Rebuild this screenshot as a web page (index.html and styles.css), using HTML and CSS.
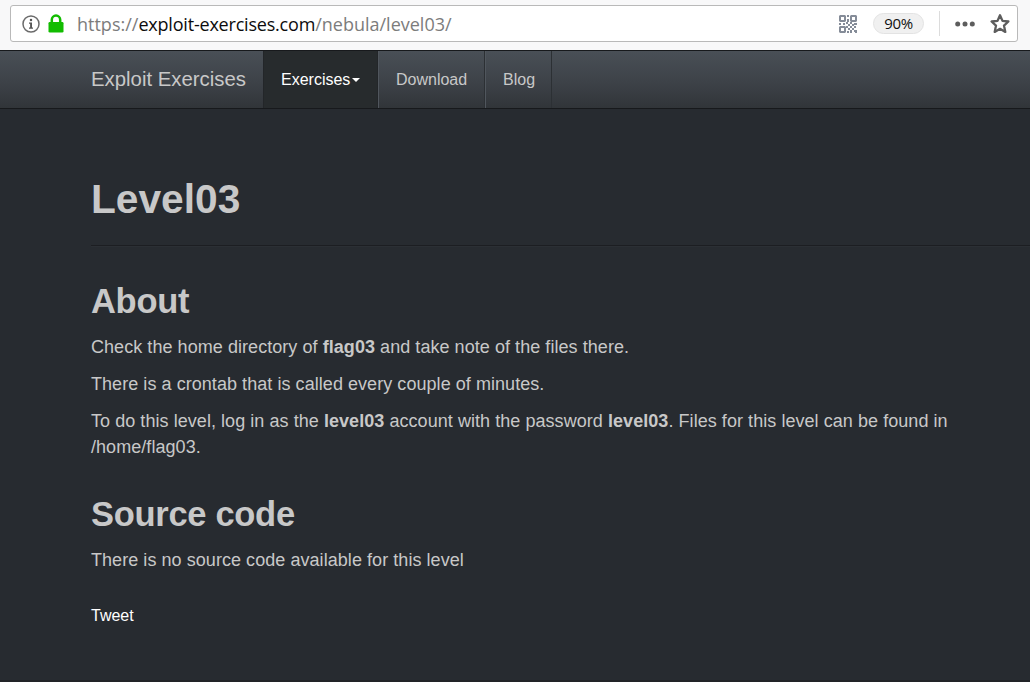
FILE: index.html
```html
<!DOCTYPE html>
<html lang="en">
<head>
<meta charset="utf-8">
<title>Exploit Exercises - Level03</title>
<link rel="stylesheet" href="styles.css">
</head>
<body>
<div class="toolbar">
  <div class="urlbar">
    <svg class="info" width="20" height="20" viewBox="0 0 20 20"><circle cx="10" cy="10" r="8" fill="none" stroke="#6b6b6b" stroke-width="1.5"/><circle cx="10" cy="6" r="1.25" fill="#555"/><path d="M8 8.4h3v5h1v1.3H8v-1.3h1.1V9.7H8z" fill="#555"/></svg>
    <svg class="lock" width="16" height="20" viewBox="0 0 16 20"><path d="M3.8 10V5.8a4.2 4.2 0 0 1 8.4 0V10" fill="none" stroke="#12bc00" stroke-width="2.5"/><rect x="0.5" y="8" width="15" height="10.5" rx="1.3" fill="#12bc00"/></svg>
    <div class="url"><span class="scheme">https://</span><span class="domain">exploit-exercises.com</span><span class="path">/nebula/level03/</span></div>
    <svg class="qr" width="18" height="18" viewBox="0 0 18 18" fill="#858c98"><path fill-rule="evenodd" d="M1 0h5l1 1v5l-1 1H1L0 6V1zM2 2v3h3V2zM12 0h5l1 1v5l-1 1h-5l-1-1V1zM13 2v3h3V2zM1 11h5l1 1v5l-1 1H1l-1-1v-5zM2 13v3h3v-3z"/><path d="M8 0h2v2H8zM8 4h2v3H8zM0 8h2v2H0zM4 8h2v2H4zM7 7h2v2H7zM9 9h2v2H9zM11 7h2v2h-2zM15 8h3v2h-3zM7 11h2v2H7zM11 11h2v2h-2zM13 9h2v2h-2zM9 13h2v2H9zM13 13h2v2h-2zM15 11h2v2h-2zM11 15h2v3h-2zM15 15h3v3h-2v-1h-1zM8 16h2v2H8z"/></svg>
    <span class="zoom">90%</span>
    <span class="divider"></span>
    <svg class="dots" width="20" height="6" viewBox="0 0 20 6" fill="#5d5d5d"><circle cx="2.7" cy="3" r="2.5"/><circle cx="10" cy="3" r="2.5"/><circle cx="17.3" cy="3" r="2.5"/></svg>
    <svg class="star" width="20" height="21" viewBox="0 0 20 21"><path d="M10 2.3l2.5 5.6 5.9.6-4.4 4.1 1.3 6.3-5.3-3.1-5.3 3.1L6 12.6 1.6 8.5l5.9-.6z" fill="none" stroke="#5d5d5d" stroke-width="2.3" stroke-linejoin="round"/></svg>
  </div>
</div>
<nav class="navbar">
  <a class="brand">Exploit Exercises</a>
  <a class="item active">Exercises<span class="caret"></span></a>
  <a class="item download">Download</a>
  <a class="item blog">Blog</a>
</nav>
<main class="content">
  <h1>Level03</h1>
  <hr>
  <h2>About</h2>
  <p>Check the home directory of <b>flag03</b> and take note of the files there.</p>
  <p>There is a crontab that is called every couple of minutes.</p>
  <p>To do this level, log in as the <b>level03</b> account with the password <b>level03</b>. Files for this level can be found in<br>/home/flag03.</p>
  <h2 class="source">Source code</h2>
  <p>There is no source code available for this level</p>
  <a class="tweet">Tweet</a>
</main>
</body>
</html>
```
FILE: styles.css
```css
* { box-sizing: border-box; }
body {
  margin: 0;
  height: 682px;
  overflow: hidden;
  border-bottom: 2px solid #222428;
  background: #272b30;
  color: #c8c8c8;
  font-family: "Liberation Sans", Arial, sans-serif;
}
.toolbar {
  height: 50px;
  padding: 5px 12px 0 10px;
  background: #f8f8f9;
}
.urlbar {
  display: flex;
  align-items: center;
  height: 37px;
  padding: 0 7px 0 10px;
  border: 1px solid #b9b9b9;
  border-radius: 3px;
  background: #fff;
}
.urlbar svg { flex: none; }
.lock { margin-left: 7px; }
.url {
  flex: 1;
  margin-left: 13px;
  font: 18px/24px "Open Sans", sans-serif;
  white-space: nowrap;
  color: #7c7c7c;
}
.domain {
  color: #0c0c0d;
  letter-spacing: -0.2px;
}
.zoom {
  width: 51px;
  height: 21px;
  margin-left: 16px;
  border: 1px solid #e3e3e3;
  border-radius: 11px;
  background: #f0f0f0;
  color: #111;
  font: 15px/19px "Open Sans", sans-serif;
  letter-spacing: -0.3px;
  text-align: center;
}
.divider {
  width: 1px;
  height: 25px;
  margin-left: 15px;
  background: #dcdcdc;
}
.dots { margin-left: 15px; }
.star { margin-left: 15px; }
.navbar {
  display: flex;
  height: 59px;
  padding-left: 73px;
  border-top: 1px solid #17191c;
  border-bottom: 1px solid #17191c;
  background: linear-gradient(#494f56, #3d4248 55%, #313539);
  line-height: 56px;
}
.brand {
  width: 190px;
  padding-left: 18px;
  font-size: 20.35px;
}
.item {
  padding-left: 17px;
  border-right: 1px solid #2c3034;
  border-left: 1px solid #50565d;
  font-size: 16px;
  line-height: 58px;
}
.active {
  width: 115px;
  border-color: #232629;
  background: #272b2d;
  color: #fff;
}
.download { width: 107px; }
.blog { width: 67px; }
.caret {
  display: inline-block;
  margin-left: 2px;
  border: 4px solid transparent;
  border-top-color: #fff;
  border-bottom: 0;
  vertical-align: 3px;
}
.content { padding: 66px 0 0 91px; }
h1 {
  margin: 0;
  font-size: 40.7px;
  line-height: 48px;
}
hr {
  height: 2px;
  margin: 22px 0 30px;
  border: 0;
  border-top: 1px solid #1c1e22;
  background: #2b2f34;
}
h2 {
  margin: 0 0 9px;
  font-size: 34.5px;
  line-height: 48px;
  letter-spacing: -0.3px;
}
p {
  margin: 0 0 11px;
  font-size: 18px;
  line-height: 26px;
  letter-spacing: 0.055px;
  white-space: nowrap;
}
h2.source { margin-top: 30px; }
.tweet {
  display: block;
  margin-top: 32px;
  color: #fff;
  font-size: 16px;
  line-height: 22px;
}
```
